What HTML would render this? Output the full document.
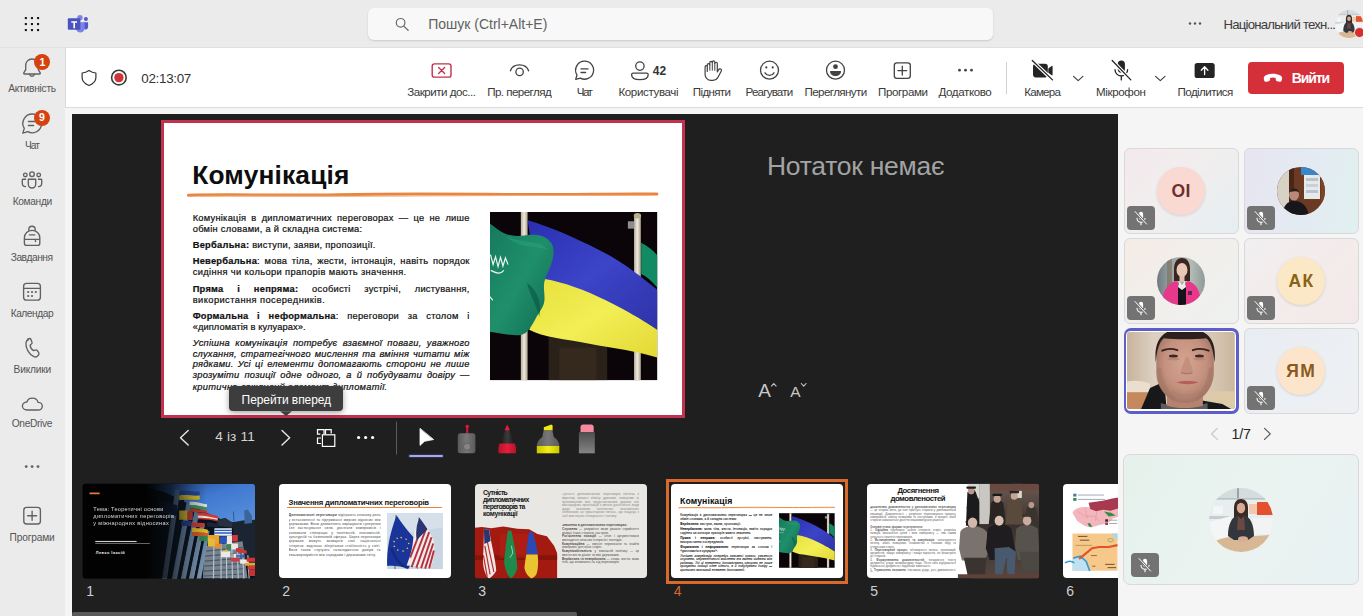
<!DOCTYPE html>
<html lang="uk">
<head>
<meta charset="utf-8">
<title>Teams</title>
<style>
*{box-sizing:border-box;margin:0;padding:0}
html,body{width:1363px;height:616px;overflow:hidden}
body{background:#ebebeb;font-family:"Liberation Sans",sans-serif;color:#424242;position:relative;font-size:12px;line-height:12px}
.abs{position:absolute}
.t{position:absolute;white-space:nowrap;color:#424242}
svg{position:absolute;left:0;top:0;overflow:visible}
#search{left:368px;top:8px;width:625px;height:32px;background:#f8f8f8;border-radius:6px;box-shadow:0 1px 2px rgba(0,0,0,.14)}
#tb{left:65px;top:47px;width:1298px;height:60px;background:#fff;border-top:1px solid #dfdfdf;border-left:1px solid #dadada}
#tbsh{left:65px;top:107px;width:1298px;height:1px;background:#dcdcdc}
#content{left:65px;top:108px;width:1298px;height:508px;background:#f5f5f5}
#leave{left:1248px;top:62px;width:96px;height:32px;background:#d5303a;border-radius:4px}
#stage{left:72px;top:114px;width:1046px;height:502px;background:#1f1f1f;overflow:hidden}
#slide{left:161px;top:120px;width:524px;height:298px;background:#fff;border:3px solid #c2314d}
.tile{position:absolute;border-radius:6px;border:1px solid #d9d9d9;overflow:hidden}
.mic{position:absolute;width:28px;height:24px;border-radius:4px;background:#737373}
.av{position:absolute;border-radius:50%;overflow:hidden}
.th{position:absolute;top:484px;width:172px;height:95px;border-radius:4px;background:#fff;overflow:hidden}
.tiny{text-align:justify;overflow:hidden;letter-spacing:.05px}
.mini .t{-webkit-text-stroke:0 transparent!important}
.mini .t[style*="font-size:9.3px"]{color:#3c3c3c!important}
.badge{position:absolute;width:16px;height:16px;border-radius:50%;background:#d6420f}
</style>
</head>
<body>
<!-- ================= TOP BAR ================= -->
<div id="search" class="abs"></div>
<div class="t" style="left:428.30px;top:17.35px;line-height:14.0px;font-size:14px;color:#616161;letter-spacing:-0.013px;">Пошук (Ctrl+Alt+E)</div>
<div class="t" style="left:1223.50px;top:18.13px;line-height:13.2px;font-size:13.2px;color:#3d3d3d;letter-spacing:-0.781px;">Національний техн...</div>
<svg style="left:1335px;top:9.500px;filter:blur(.4px)" width="28" height="28" viewBox="0 0 64 64">  <defs><clipPath id="ca3"><circle cx="32" cy="32" r="32"/></clipPath></defs>
  <g clip-path="url(#ca3)">
    <rect width="64" height="64" fill="#e8edee"/>
    <rect x="0" y="0" width="64" height="12" fill="#d4dcde"/>
    <rect x="28" y="0" width="2" height="20" fill="#9aa4a8"/><rect x="0" y="10" width="64" height="1.500" fill="#b9c4c8"/>
    <rect x="48" y="14" width="16" height="13" fill="#e4512f"/>
    <rect x="40" y="16" width="8" height="10" fill="#f1c9b0"/>
    <rect x="0" y="28" width="22" height="3" fill="#c4ced2"/><rect x="4" y="18" width="10" height="8" fill="#f3f6f6"/>
    <path d="M0 34l22-6v20l-22 8z" fill="#f4f6f6"/>
    <path d="M44 30h20v16h-20z" fill="#f2f4f4"/>
    <path d="M0 56c10-6 22-8 34-8s22 0 30-2v18h-64z" fill="#d8b894"/>
    <path d="M25 20c0-6 3-9 7-9s7 3 7 9v14h-14z" fill="#3a2a26"/>
    <ellipse cx="32" cy="20" rx="4.200" ry="5.200" fill="#d9ab94"/>
    <path d="M19 48c0-12 4-19 9-20l4 3 4-3c5 1 9 8 9 20l-6 4h-14z" fill="#33363c"/>
    <path d="M29 28l3 3 3-3 1 14h-8z" fill="#6a4a40"/>
    <ellipse cx="34" cy="51" rx="5" ry="2.800" fill="#d9ab94"/>
  </g></svg>
<div class="abs" style="left:1354px;top:27px;width:11px;height:11px;border-radius:50%;background:#d92c2c;border:1px solid #ebebeb"></div>
<svg width="1363" height="48" viewBox="0 0 1363 48">
  <!-- waffle -->
  <g fill="#1a1a1a">
    <rect x="24.8" y="17" width="2.1" height="2.1"/><rect x="30.9" y="17" width="2.1" height="2.1"/><rect x="37" y="17" width="2.1" height="2.1"/>
    <rect x="24.8" y="23" width="2.1" height="2.1"/><rect x="30.9" y="23" width="2.1" height="2.1"/><rect x="37" y="23" width="2.1" height="2.1"/>
    <rect x="24.8" y="29" width="2.1" height="2.1"/><rect x="30.9" y="29" width="2.1" height="2.1"/><rect x="37" y="29" width="2.1" height="2.1"/>
  </g>
  <!-- teams logo -->
  <circle cx="85.9" cy="19" r="2" fill="#5059c9"/>
  <path d="M83.5 22.3h4.1c.3 0 .5.2.5.5v4.2a2.6 2.6 0 0 1-4.6 1.6z" fill="#5059c9"/>
  <circle cx="80" cy="17.6" r="2.7" fill="#7b83eb"/>
  <path d="M76 22.2h7.9c.4 0 .7.3.7.7v5.3a4.3 4.3 0 0 1-8.6 0z" fill="#7b83eb"/>
  <rect x="67.8" y="18.2" width="12.6" height="11.6" rx="1" fill="#4b53bc"/>
  <path d="M71.3 21.3h5.8v1.5h-2.1v5.4h-1.6v-5.4h-2.1z" fill="#fff"/>
  <!-- search icon -->
  <circle cx="400.6" cy="22.8" r="4.3" fill="none" stroke="#6a6a6a" stroke-width="1.2"/>
  <path d="M403.8 26.1l4.3 4.2" stroke="#6a6a6a" stroke-width="1.3" stroke-linecap="round"/>
  <!-- more -->
  <circle cx="1190" cy="23.5" r="1.2" fill="#555"/><circle cx="1195" cy="23.5" r="1.2" fill="#555"/><circle cx="1200" cy="23.5" r="1.2" fill="#555"/>
</svg>

<!-- ================= TOOLBAR ================= -->
<div id="topline" class="abs" style="left:0;top:47px;width:66px;height:1px;background:#e1e1e1"></div>
<div id="tb" class="abs"></div>
<div id="tbsh" class="abs"></div>
<div id="content" class="abs"></div>
<!--TOOLBAR-->
<div class="t" style="left:141.30px;top:71.96px;line-height:13.4px;font-size:13.4px;color:#333;letter-spacing:-0.304px;">02:13:07</div>
<div class="t" style="left:407.30px;top:86.48px;line-height:11.6px;font-size:11.6px;color:#3a3a3a;letter-spacing:-0.503px;">Закрити дос...</div>
<div class="t" style="left:487.20px;top:86.48px;line-height:11.6px;font-size:11.6px;color:#3a3a3a;letter-spacing:-0.558px;">Пр. перегляд</div>
<div class="t" style="left:576.80px;top:86.48px;line-height:11.6px;font-size:11.6px;color:#3a3a3a;letter-spacing:-1.617px;">Чат</div>
<div class="t" style="left:618.40px;top:86.48px;line-height:11.6px;font-size:11.6px;color:#3a3a3a;letter-spacing:-0.380px;">Користувачі</div>
<div class="t" style="left:692.80px;top:86.48px;line-height:11.6px;font-size:11.6px;color:#3a3a3a;letter-spacing:-0.657px;">Підняти</div>
<div class="t" style="left:745.60px;top:86.48px;line-height:11.6px;font-size:11.6px;color:#3a3a3a;letter-spacing:-0.820px;">Реагувати</div>
<div class="t" style="left:804.50px;top:86.48px;line-height:11.6px;font-size:11.6px;color:#3a3a3a;letter-spacing:-0.599px;">Переглянути</div>
<div class="t" style="left:878.00px;top:86.48px;line-height:11.6px;font-size:11.6px;color:#3a3a3a;letter-spacing:-0.402px;">Програми</div>
<div class="t" style="left:938.50px;top:86.48px;line-height:11.6px;font-size:11.6px;color:#3a3a3a;letter-spacing:-0.410px;">Додатково</div>
<div class="t" style="left:1024.20px;top:86.48px;line-height:11.6px;font-size:11.6px;color:#3a3a3a;letter-spacing:-0.746px;">Камера</div>
<div class="t" style="left:1096.00px;top:86.48px;line-height:11.6px;font-size:11.6px;color:#3a3a3a;letter-spacing:-0.371px;">Мікрофон</div>
<div class="t" style="left:1177.60px;top:86.48px;line-height:11.6px;font-size:11.6px;color:#3a3a3a;letter-spacing:-0.587px;">Поділитися</div>
<div class="t" style="left:652.80px;top:64.74px;line-height:12.0px;font-size:12px;font-weight:bold;color:#333;letter-spacing:0.041px;">42</div>
<div id="leave" class="abs"></div>
<div class="t" style="left:1291.80px;top:71.05px;line-height:14.0px;font-size:14px;font-weight:bold;color:#fff;letter-spacing:-1.099px;">Вийти</div>
<svg width="1363" height="110" viewBox="0 0 1363 110" fill="none" stroke="#424242" stroke-width="1.3" stroke-linecap="round" stroke-linejoin="round">
  <!-- shield -->
  <path d="M89 70.6c2.3 1.6 4.6 2.3 6.9 2.4v4.6c0 3.6-2.6 6.3-6.9 7.9c-4.3-1.6-6.9-4.3-6.9-7.9v-4.6c2.3-.1 4.6-.8 6.900-2.400z" stroke="#333" stroke-width="1.2"/>
  <!-- record -->
  <circle cx="118.9" cy="77.6" r="7.3" stroke="#3a3a3a" stroke-width="1.6"/>
  <circle cx="118.9" cy="77.600" r="4.700" fill="#d13438" stroke="none"/>
  <!-- close share (red) -->
  <rect x="432.2" y="63.900" width="18.800" height="13.200" rx="2.200" stroke="#c4314b" stroke-width="1.400"/>
  <path d="M438.6 67.5l6 6M444.6 67.5l-6 6" stroke="#c4314b" stroke-width="1.300"/>
  <!-- eye -->
  <path d="M510.4 70.8c1.2-3.800 4.800-6 9.100-6s7.900 2.200 9.100 6" />
  <circle cx="519.600" cy="71.900" r="3.700"/>
  <!-- chat bubble -->
  <path d="M584.6 61.200a9 9 0 1 1-4.300 16.900l-4.600 1.300 1.300-4.400a9 9 0 0 1 7.600-13.800z"/>
  <path d="M581 68.900h7M581 72.500h4.600"/>
  <!-- people -->
  <circle cx="639.900" cy="66.100" r="4.200"/>
  <path d="M633.200 73.100h13.400c.9 0 1.600.7 1.600 1.600 0 3-3.200 4.900-8.300 4.900s-8.300-1.900-8.300-4.900c0-.9.700-1.600 1.600-1.600z"/>
  <!-- hand -->
  <path d="M707.300 71.500v-6.600a1.250 1.250 0 0 1 2.500 0v-2.300a1.250 1.250 0 0 1 2.500 0v-.4a1.250 1.250 0 0 1 2.500 0v1.300a1.250 1.250 0 0 1 2.500 0v8.400l1.400-2.300c.5-.8 1.500-1 2.200-.5.600.4.800 1.200.4 1.900l-3.300 6.300c-1 1.900-2.900 3-5 3h-2.100c-3.200 0-5.800-2.600-5.800-5.800v-7.800a1.100 1.100 0 0 1 2.200 0z" stroke-width="1.200"/>
  <path d="M709.800 64.900v5.400M712.300 62.600v7.700M714.800 63.500v6.800" stroke-width="1"/>
  <!-- smiley -->
  <circle cx="769.500" cy="70.200" r="9"/>
  <circle cx="766.300" cy="67.400" r="1.100" fill="#424242" stroke="none"/><circle cx="772.700" cy="67.400" r="1.100" fill="#424242" stroke="none"/>
  <path d="M765 72.800c1 1.700 2.600 2.600 4.500 2.600s3.500-.9 4.500-2.600"/>
  <!-- view -->
  <circle cx="835.500" cy="70.200" r="9"/>
  <circle cx="835.500" cy="66.700" r="2.400" fill="#424242" stroke="none"/>
  <path d="M830.500 71h10c.3 0 .5.200.5.500 0 2.700-2.400 4.500-5.500 4.500s-5.500-1.800-5.500-4.500c0-.3.200-.5.500-.5z" fill="#424242" stroke="none"/>
  <!-- apps -->
  <rect x="894.300" y="62.800" width="16" height="15.600" rx="2.600"/>
  <path d="M902.300 66.200v8.800M897.900 70.600h8.800"/>
  <!-- more -->
  <g fill="#424242" stroke="none"><circle cx="959.500" cy="70.200" r="1.400"/><circle cx="965.500" cy="70.200" r="1.400"/><circle cx="971.500" cy="70.200" r="1.400"/></g>
  <!-- divider -->
  <path d="M1006.500 62v32.500" stroke="#d1d1d1" stroke-width="1" stroke-linecap="butt"/>
  <!-- camera off -->
  <rect x="1033" y="63.700" width="14.800" height="13.700" rx="2.800" fill="#242424" stroke="none"/>
  <path d="M1048.300 68.400l3.400-2.500c.4-.3.900 0 .9.500v8.300c0 .5-.5.800-.9.500l-3.400-2.500z" fill="#242424" stroke="none"/>
  <path d="M1032.300 60.500l20.200 19.400" stroke="#fff" stroke-width="3.600"/>
  <path d="M1032.300 60.500l20.200 19.400" stroke="#242424" stroke-width="1.300"/>
  <path d="M1073.500 76.400l4.700 4.200 4.700-4.200" stroke-width="1.200"/>
  <!-- mic off -->
  <rect x="1117.700" y="60.500" width="7.200" height="12.200" rx="3.600" fill="#242424" stroke="none"/>
  <path d="M1115 69.700a6.300 6.300 0 0 0 12.600 0M1121.300 76.200v3.700" stroke="#242424"/>
  <path d="M1112.200 60.500l18.600 19.400" stroke="#fff" stroke-width="3.600"/>
  <path d="M1112.200 60.500l18.600 19.400" stroke="#242424" stroke-width="1.300"/>
  <path d="M1155.600 76.400l4.700 4.200 4.700-4.200" stroke-width="1.200"/>
  <!-- share -->
  <rect x="1194.600" y="63.100" width="20.100" height="14.900" rx="2.600" fill="#242424" stroke="none"/>
  <path d="M1204.600 74.600v-7.600M1201.300 70.200l3.300-3.400 3.300 3.400" stroke="#fff" stroke-width="1.300"/>
  <!-- hangup phone -->
  <path d="M1264 79.600c-.6-1.600 0-3.100 1.500-4 4.600-2.500 10.300-2.500 14.900 0 1.500.9 2.100 2.400 1.500 4l-.3.900c-.3.900-1.200 1.400-2.100 1.200l-2.400-.5c-.8-.2-1.400-.9-1.400-1.700v-1.500c-1.800-.7-3.800-.7-5.600 0v1.500c0 .8-.6 1.500-1.400 1.700l-2.400.5c-.9.200-1.800-.3-2.100-1.200z" fill="#fff" stroke="none"/>
</svg>
<!--/TOOLBAR-->

<!-- ================= RAIL ================= -->
<!--RAIL-->
<div class="t" style="left:8.20px;top:84.27px;line-height:10.2px;font-size:10.2px;color:#555;letter-spacing:-0.233px;">Активність</div>
<div class="t" style="left:25.00px;top:140.57px;line-height:10.2px;font-size:10.2px;color:#555;letter-spacing:-0.953px;">Чат</div>
<div class="t" style="left:12.70px;top:196.97px;line-height:10.2px;font-size:10.2px;color:#555;letter-spacing:-0.339px;">Команди</div>
<div class="t" style="left:10.70px;top:252.77px;line-height:10.2px;font-size:10.2px;color:#555;letter-spacing:-0.457px;">Завдання</div>
<div class="t" style="left:10.70px;top:308.77px;line-height:10.2px;font-size:10.2px;color:#555;letter-spacing:-0.461px;">Календар</div>
<div class="t" style="left:13.60px;top:364.67px;line-height:10.2px;font-size:10.2px;color:#555;letter-spacing:-0.224px;">Виклики</div>
<div class="t" style="left:11.70px;top:418.67px;line-height:10.2px;font-size:10.2px;color:#555;letter-spacing:-0.319px;">OneDrive</div>
<div class="t" style="left:9.60px;top:532.57px;line-height:10.2px;font-size:10.2px;color:#555;letter-spacing:-0.172px;">Програми</div>
<svg width="66" height="616" viewBox="0 0 66 616" fill="none" stroke="#616161" stroke-width="1.35" stroke-linecap="round" stroke-linejoin="round">
  <!-- bell -->
  <path d="M32 59c-3.700 0-6.300 2.800-6.300 6.400v4.200l-1.900 3.300c-.3.500.1 1.100.6 1.100h15.200c.5 0 .9-.6.600-1.100l-1.900-3.300v-4.200c0-3.600-2.600-6.400-6.300-6.400z"/>
  <path d="M29.600 74.300a2.450 2.450 0 0 0 4.800 0"/>
  <!-- chat -->
  <path d="M32.300 114a9.400 9.400 0 1 1-4.500 17.700l-5 1.400 1.500-4.700a9.400 9.400 0 0 1 8-14.400z"/>
  <path d="M28.400 121.500h7.800M28.400 125.500h5.200"/>
  <!-- teams people -->
  <circle cx="32" cy="174.200" r="2.300"/><circle cx="25.300" cy="174.900" r="1.800"/><circle cx="38.700" cy="174.900" r="1.800"/>
  <path d="M28.300 179.200h7.400v5.100a3.700 3.700 0 0 1-7.400 0z"/>
  <path d="M25.600 179.200h-2.600c-.4 0-.7.300-.7.700v3.300c0 2 1.500 3.400 3.300 3.400M38.400 179.200h2.600c.4 0 .7.300.7.700v3.300c0 2-1.500 3.400-3.300 3.400"/>
  <!-- backpack -->
  <path d="M28.800 230.300v-.8a3.200 3.200 0 0 1 6.400 0v.8"/>
  <path d="M32.100 230.300c4.300 0 7.700 3.300 7.700 7.500v5.400c0 1.200-1 2.200-2.200 2.200h-11c-1.200 0-2.200-1-2.200-2.200v-5.400c0-4.200 3.400-7.500 7.700-7.500z"/>
  <path d="M24.600 239.300h15M29.300 234.800h5.600M35.500 239.500v2"/>
  <!-- calendar -->
  <rect x="23.600" y="283.400" width="16.800" height="16.800" rx="3"/>
  <path d="M23.600 288.300h16.800"/>
  <g fill="#616161" stroke="none"><circle cx="28.200" cy="292" r="1.100"/><circle cx="32" cy="292" r="1.100"/><circle cx="35.800" cy="292" r="1.100"/><circle cx="28.200" cy="296" r="1.100"/><circle cx="32" cy="296" r="1.100"/></g>
  <!-- phone -->
  <path d="M27.700 339l1.600-.5c1-.3 2 .2 2.400 1.100l1.100 2.700c.4.900.1 1.900-.6 2.500l-1.600 1.300c.3 2.400 2.100 5.300 4.100 6.400l2-.7c.9-.3 1.900 0 2.400.8l1.600 2.300c.5.800.4 1.900-.3 2.600l-1.100 1.100c-1.100 1.100-2.700 1.500-4.200.9-5.400-2.200-9.800-9.800-9.300-15.900.2-1.700 1.300-3.300 2.900-3.800z" transform="translate(32.200,347.400) scale(.86) translate(-33.100,-348.700)" stroke-width="1.550"/>
  <!-- cloud -->
  <path d="M27 410h11.200c2.300 0 4.100-1.700 4.100-3.800 0-2.100-1.800-3.800-4.100-3.800h-.2c-.5-2.500-2.800-4.300-5.600-4.300-2.600 0-4.900 1.600-5.500 3.900-2.600.1-4.500 1.900-4.500 4 0 2.200 2 4 4.600 4z"/>
  <!-- dots -->
  <g fill="#616161" stroke="none"><circle cx="26.200" cy="466.600" r="1.400"/><circle cx="32.100" cy="466.600" r="1.400"/><circle cx="38" cy="466.600" r="1.400"/></g>
  <!-- apps -->
  <rect x="23.800" y="507.400" width="16.600" height="16.600" rx="2.800"/>
  <path d="M32.100 511.200v9M27.600 515.700h9"/>
</svg>
<div class="badge" style="left:33.900px;top:53.600px"></div>
<div class="badge" style="left:33.900px;top:109.500px"></div>
<div class="t" style="left:39.40px;top:56.51px;line-height:10.5px;font-size:10.5px;font-weight:bold;color:#fff;">1</div>
<div class="t" style="left:39.00px;top:112.41px;line-height:10.5px;font-size:10.5px;font-weight:bold;color:#fff;">9</div>
<!--/RAIL-->

<!-- ================= STAGE ================= -->
<div id="stage" class="abs"></div>
<!--STAGE-->
<div id="slide" class="abs"></div>

<div class="t" style="left:192.20px;top:162.44px;line-height:26.3px;font-size:26.3px;font-weight:bold;color:#0d0d0d;letter-spacing:0.190px;">Комунікація</div>
<svg width="700" height="420" viewBox="0 0 700 420">
  <path d="M188.400 195.300c40-1.400 90 .6 150-.6s110-.8 170-.2 110-1.200 148.500-.4" fill="none" stroke="#e9853f" stroke-width="3" stroke-linecap="round"/>
  <path d="M200 196.300c60-.6 120 .4 200-.2s160-.6 250-.8" fill="none" stroke="#f0b184" stroke-width="1" stroke-linecap="round"/>
</svg>
<div class="t" style="left:192.70px;top:213.63px;line-height:9.3px;font-size:9.3px;color:#111;letter-spacing:0.250px;word-spacing:2.287px;-webkit-text-stroke:0.22px currentColor;">Комунікація в дипломатичних переговорах — це не лише</div>
<div class="t" style="left:192.70px;top:224.63px;line-height:9.3px;font-size:9.3px;color:#111;letter-spacing:0.285px;-webkit-text-stroke:0.22px currentColor;">обмін словами, а й складна система:</div>
<div class="t" style="left:192.70px;top:240.53px;line-height:9.3px;font-size:9.3px;color:#111;letter-spacing:0.262px;-webkit-text-stroke:0.22px currentColor;"><b>Вербальна:</b> виступи, заяви, пропозиції.</div>
<div class="t" style="left:192.70px;top:257.43px;line-height:9.3px;font-size:9.3px;color:#111;letter-spacing:0.250px;word-spacing:1.809px;-webkit-text-stroke:0.22px currentColor;"><b>Невербальна</b>: мова тіла, жести, інтонація, навіть порядок</div>
<div class="t" style="left:192.70px;top:268.03px;line-height:9.3px;font-size:9.3px;color:#111;letter-spacing:0.369px;-webkit-text-stroke:0.22px currentColor;">сидіння чи кольори прапорів мають значення.</div>
<div class="t" style="left:192.70px;top:284.53px;line-height:9.3px;font-size:9.3px;color:#111;letter-spacing:0.250px;word-spacing:10.921px;-webkit-text-stroke:0.22px currentColor;"><b>Пряма і непряма:</b> особисті зустрічі, листування,</div>
<div class="t" style="left:192.70px;top:295.53px;line-height:9.3px;font-size:9.3px;color:#111;letter-spacing:0.433px;-webkit-text-stroke:0.22px currentColor;">використання посередників.</div>
<div class="t" style="left:192.70px;top:311.93px;line-height:9.3px;font-size:9.3px;color:#111;letter-spacing:0.250px;word-spacing:5.838px;-webkit-text-stroke:0.22px currentColor;"><b>Формальна і неформальна</b>: переговори за столом і</div>
<div class="t" style="left:192.70px;top:322.93px;line-height:9.3px;font-size:9.3px;color:#111;letter-spacing:0.089px;-webkit-text-stroke:0.22px currentColor;">«дипломатія в кулуарах».</div>
<div class="t" style="left:192.70px;top:339.03px;line-height:9.3px;font-size:9.3px;font-style:italic;color:#111;letter-spacing:0.250px;word-spacing:2.446px;-webkit-text-stroke:0.22px currentColor;">Успішна комунікація потребує взаємної поваги, уважного</div>
<div class="t" style="left:192.70px;top:349.83px;line-height:9.3px;font-size:9.3px;font-style:italic;color:#111;letter-spacing:0.250px;word-spacing:0.979px;-webkit-text-stroke:0.22px currentColor;">слухання, стратегічного мислення та вміння читати між</div>
<div class="t" style="left:192.70px;top:360.43px;line-height:9.3px;font-size:9.3px;font-style:italic;color:#111;letter-spacing:0.250px;word-spacing:1.334px;-webkit-text-stroke:0.22px currentColor;">рядками. Усі ці елементи допомагають сторони не лише</div>
<div class="t" style="left:192.70px;top:371.33px;line-height:9.3px;font-size:9.3px;font-style:italic;color:#111;letter-spacing:0.250px;word-spacing:2.113px;-webkit-text-stroke:0.22px currentColor;">зрозуміти позиції одне одного, а й побудувати довіру —</div>
<div class="t" style="left:192.70px;top:382.73px;line-height:9.3px;font-size:9.3px;font-style:italic;color:#111;letter-spacing:0.296px;-webkit-text-stroke:0.22px currentColor;">критично важливий елемент дипломатії.</div>
<!-- slide photo -->
<svg style="left:490.2px;top:211.700px;filter:blur(.45px)" width="167.200" height="168.100" viewBox="0 0 542 545" preserveAspectRatio="none">
  <defs>
    <linearGradient id="gb" x1="0" y1="0" x2="1" y2="1"><stop offset="0" stop-color="#2a2fb0"/><stop offset=".5" stop-color="#3c44c8"/><stop offset="1" stop-color="#2e33a8"/></linearGradient>
    <linearGradient id="gy" x1="0" y1="0" x2="1" y2="1"><stop offset="0" stop-color="#e6e13c"/><stop offset=".5" stop-color="#f2ee55"/><stop offset="1" stop-color="#e3d935"/></linearGradient>
    <linearGradient id="gg" x1="0" y1="0" x2="1" y2="1"><stop offset="0" stop-color="#157a5c"/><stop offset=".5" stop-color="#1f8f6b"/><stop offset="1" stop-color="#0f6a50"/></linearGradient>
    <linearGradient id="gp" x1="0" y1="0" x2="1" y2="0"><stop offset="0" stop-color="#b8b0a0"/><stop offset=".5" stop-color="#efe9dc"/><stop offset="1" stop-color="#a89f8c"/></linearGradient>
  </defs>
  <rect width="542" height="545" fill="#0b0509"/>
  <rect x="190" y="395" width="190" height="150" fill="#2a2118"/>
  <rect x="225" y="440" width="120" height="105" fill="#3a2e20" opacity=".7"/>
  <rect x="100" y="0" width="22" height="545" fill="url(#gp)"/>
  <rect x="467" y="12" width="22" height="533" fill="url(#gp)"/>
  <ellipse cx="478" cy="12" rx="12" ry="9" fill="#b9ae8a"/>
  <rect x="447" y="30" width="20" height="24" fill="#8d8d8d"/>
  <path d="M490 100c20 10 38 24 52 40v105c-18-22-34-36-52-44z" fill="#128a63"/>
  <path d="M122 27c70 20 150 55 230 95s140 90 190 130v130c-60-40-130-80-200-100s-130-40-190-60z" fill="url(#gb)"/>
  <path d="M177 217c60 10 130 35 200 70s120 65 165 95v90c-60-20-140-30-220-45s-150-20-195-45c20-50 40-110 50-165z" fill="url(#gy)"/>
  <path d="M0 37c30 25 60 45 100 40s75-10 100 25c15 30 0 70-20 110c-15 40 10 70-15 105c-20 30-30 60-50 75s-60 5-115 -4z" fill="url(#gg)"/>
  <path d="M50 75c40 30 110 10 140 50c-40-20-100 0-140-50z" fill="#2aa37c" opacity=".5"/>
  <path d="M120 230c30 20 50 60 40 110c-10-40-30-70-40-110z" fill="#0a5540" opacity=".6"/>
  <path d="M2 140l8 30 8-25 8 32 8-30 8 28 8-26 8 20M4 190c20 10 30 12 40 0M0 275l8 10" fill="none" stroke="#e9f3ee" stroke-width="4" stroke-linecap="round"/>
</svg>

<!-- tooltip -->
<div class="abs" style="left:229px;top:386.400px;width:114px;height:25.100px;background:#3d3d3d;border-radius:4px;box-shadow:0 2px 6px rgba(0,0,0,.35)"></div>
<svg width="400" height="420" viewBox="0 0 400 420"><path d="M280 411.300h12l-6 4.700z" fill="#3d3d3d"/></svg>
<div class="t" style="left:241.60px;top:393.94px;line-height:12.0px;font-size:12px;color:#fff;letter-spacing:-0.078px;">Перейти вперед</div>
<!-- controls -->
<div class="t" style="left:215.20px;top:430.09px;line-height:13.6px;font-size:13.600px;color:#d6d6d6;letter-spacing:0.186px;">4 із 11</div>
<svg width="700" height="470" viewBox="0 0 700 470" fill="none" stroke="#fff" stroke-width="1.200" stroke-linecap="round" stroke-linejoin="round">
  <path d="M188.200 430.400l-7.700 7.300 7.700 7.300" stroke="#e6e6e6" stroke-width="1.400"/>
  <path d="M282 430.400l7.700 7.300-7.700 7.300" stroke="#e6e6e6" stroke-width="1.400"/>
  <!-- grid icon -->
  <path d="M324 434.200v-4.600h-6.500v4.600h2.800M325.500 434.200v-4.600h5.700v3.800M321 438h-3.500v5.500h3.500" stroke-linecap="butt" stroke-linejoin="miter"/>
  <rect x="322.400" y="434.800" width="12.400" height="11.600" stroke-linejoin="miter"/>
  <g fill="#fff" stroke="none"><circle cx="358.600" cy="437.500" r="1.600"/><circle cx="365.600" cy="437.500" r="1.600"/><circle cx="372.600" cy="437.500" r="1.600"/></g>
  <path d="M396.500 421.500v33" stroke="#5c5c5c" stroke-width="1" stroke-linecap="butt"/>
  <!-- cursor -->
  <path d="M420 428.700v16.700l4.600-4.100 8.700-1.700z" fill="#fff" stroke="#fff" stroke-width=".8"/>
  <rect x="408" y="453.800" width="36" height="4.400" rx="2.200" fill="#3a3b6e" stroke="none" opacity=".55"/>
  <rect x="409.200" y="454.900" width="33.800" height="2.200" rx="1.100" fill="#a7abe8" stroke="none"/>
</svg>
<!-- tools -->
<svg width="700" height="470" viewBox="0 0 700 470">
  <defs>
    <linearGradient id="tg" x1="0" y1="0" x2="1" y2="0"><stop offset="0" stop-color="#5a5a5a"/><stop offset=".5" stop-color="#777"/><stop offset="1" stop-color="#5a5a5a"/></linearGradient>
    <linearGradient id="tr" x1="0" y1="0" x2="1" y2="0"><stop offset="0" stop-color="#b5142c"/><stop offset=".5" stop-color="#e81d3c"/><stop offset="1" stop-color="#b5142c"/></linearGradient>
    <linearGradient id="ty" x1="0" y1="0" x2="1" y2="0"><stop offset="0" stop-color="#c9c400"/><stop offset=".5" stop-color="#f3ee12"/><stop offset="1" stop-color="#c9c400"/></linearGradient>
    <linearGradient id="tk" x1="0" y1="0" x2="1" y2="0"><stop offset="0" stop-color="#121212"/><stop offset=".5" stop-color="#3b3b3b"/><stop offset="1" stop-color="#121212"/></linearGradient>
    <linearGradient id="te" x1="0" y1="0" x2="0" y2="1"><stop offset="0" stop-color="#4f4f4f"/><stop offset=".6" stop-color="#6e6e6e"/><stop offset="1" stop-color="#858585"/></linearGradient>
  </defs>
  <!-- laser -->
  <rect x="466.100" y="425" width="2.200" height="8.500" rx="1" fill="#d4152f"/><circle cx="467.200" cy="426.500" r="1.700" fill="#e2183a"/>
  <rect x="457.800" y="433.200" width="17.600" height="20.100" rx="2.500" fill="url(#tg)"/>
  <circle cx="467.100" cy="446.600" r="3.600" fill="#858585"/><circle cx="467.100" cy="446.600" r="3.600" fill="none" stroke="#5a5a5a" stroke-width=".8"/>
  <!-- pen -->
  <path d="M507.200 425l-8.400 22v6.300h17.200v-6.300z" fill="url(#tk)"/>
  <path d="M507.200 424.600l-2.600 5.600h5.200z" fill="#e81d3c"/>
  <path d="M499.600 443.400h15.200l1.200 3.600v6.300h-17.600v-6.300z" fill="url(#tr)"/>
  <!-- highlighter -->
  <path d="M543.800 427.200l7.600-2.600 1.200 1v5h-8.800z" fill="#efe916"/>
  <path d="M543.600 430.400h8.800l1.400 6.500c3 2 5.500 5 5.500 8.500v.800h-22.500v-.800c0-3.500 2.500-6.500 5.500-8.500z" fill="url(#tg)"/>
  <rect x="536.800" y="446" width="22.500" height="7.300" fill="url(#ty)"/>
  <!-- eraser -->
  <path d="M580.500 427c0-1.400 1.100-2.500 2.500-2.500h8.200c1.400 0 2.500 1.100 2.500 2.500v5.300h-13.200z" fill="#f58a9e"/>
  <rect x="578.900" y="432.200" width="15.900" height="21.100" fill="url(#te)"/>
</svg>
<!-- notes -->
<div class="t" style="left:766.90px;top:153.47px;line-height:26.5px;font-size:26.500px;color:#a3a3a3;letter-spacing:-0.257px;">Нотаток немає</div>
<div class="t" style="left:758.30px;top:380.92px;line-height:19.0px;font-size:19px;color:#c8c8c8;">A</div>
<div class="t" style="left:790.30px;top:383.88px;line-height:15.5px;font-size:15.500px;color:#c8c8c8;">A</div>
<svg width="820" height="400" viewBox="0 0 820 400" fill="none" stroke="#c8c8c8" stroke-width="1.100" stroke-linecap="round" stroke-linejoin="round">
  <path d="M771.500 386.200l2.300-2.700 2.300 2.700"/>
  <path d="M801.300 383.500l2.400 2.700 2.400-2.700"/>
</svg>
<!-- ============ THUMBNAILS ============ -->
<!-- thumb 1 -->
<svg style="left:82.120px;top:480px;filter:blur(.4px)" width="177.810" height="101.990" viewBox="-410 0 1074 616">
  <defs>
    <clipPath id="c1"><rect x="-406" y="22" width="1041" height="573" rx="18"/></clipPath>
    <linearGradient id="sky" x1="0" y1="0" x2="1" y2="1"><stop offset="0" stop-color="#1d3c78"/><stop offset=".45" stop-color="#3f78cf"/><stop offset="1" stop-color="#5a93df"/></linearGradient>
    <linearGradient id="fade" x1="-410" y1="0" x2="664" y2="0" gradientUnits="userSpaceOnUse"><stop offset="0" stop-color="#020202"/><stop offset=".36" stop-color="#020202"/><stop offset=".5" stop-color="#060a10" stop-opacity=".72"/><stop offset=".62" stop-color="#0a1018" stop-opacity=".25"/><stop offset=".7" stop-color="#000" stop-opacity="0"/></linearGradient>
    <linearGradient id="pl" x1="0" y1="0" x2="0" y2="1"><stop offset="0" stop-color="#5d7c9e"/><stop offset="1" stop-color="#8aa6c2"/></linearGradient>
  </defs>
  <g clip-path="url(#c1)">
    <rect x="-410" y="0" width="1074" height="616" fill="#0a121c"/>
    <path d="M-100 22h740v235l-110 5-100-25-90-40-120-60-120-60z" fill="url(#sky)"/>
    <path d="M500 255l60-10 75-5v260l-120 20z" fill="#1b2531"/>
    <path d="M570 182l22-4 25 40v42l-45 6z" fill="#3c6698"/><path d="M505 190l3 60" stroke="#27405e" stroke-width="4"/>
    <path d="M410 240l45-12 45 30v30l-95-10z" fill="#26313e"/>
    <path d="M330 400l230-30 30 225h-270z" fill="#76838f"/>
    <g stroke="#4a5560" stroke-width="7"><path d="M335 430l225-22M333 460l228-20M331 490l232-18M329 520l236-16M327 550l240-14M325 580l244-12"/></g>
    <g stroke="url(#pl)" stroke-width="30" stroke-linecap="butt">
      <path d="M168 60l-80 540"/><path d="M236 140l-88 460"/><path d="M283 195l-82 405"/><path d="M318 265l-68 335"/><path d="M346 305l-52 295"/>
    </g>
    <g stroke="#0c131c" stroke-width="14"><path d="M200 120l-82 480"/><path d="M262 180l-84 420"/><path d="M302 240l-76 360"/><path d="M334 300l-60 300"/></g>
    <g stroke="#b4c4d4" stroke-width="7"><path d="M388 330l-4 270M430 350v250M462 372l2 228M495 392l4 208M528 410l6 190M560 430l8 170M592 455l8 145"/></g>
    <!-- flags -->
    <path d="M177 66c40-8 80 6 124 4v26c-44 4-84-8-124 0z" fill="#24489f"/><path d="M177 94c40-8 80 4 124 0v24c-44 6-84-4-124 4z" fill="#dbc224"/>
    <path d="M55 122l110 30v68l-110-28z" fill="#151f45"/>
    <path d="M240 132c35-6 70 10 105 14v18c-35-2-70-14-105-10z" fill="#d9dedf"/><path d="M240 152c35-4 70 10 105 12v18c-35-2-70-12-105-10z" fill="#3c9456"/><path d="M240 174c35-2 70 8 105 10v14c-35 0-70-8-105-6z" fill="#c53a30"/>
    <path d="M177 184h50v56h-50z" fill="#e0bb2a"/><path d="M227 190h32v52h-32z" fill="#c43a2c"/>
    <path d="M290 196c40 0 80 10 120 22v32c-40-8-80-14-120-12z" fill="#cd3a36"/><path d="M290 214c40 0 80 10 120 18v8c-40-8-80-14-120-12z" fill="#ece7e5"/>
    <path d="M190 246h60v32h-60z" fill="#263f8e"/><path d="M250 256l80 4v26l-80-4z" fill="#cf3a30"/>
    <path d="M255 290c30-2 65 4 95 10v22c-30-4-65-8-95-8z" fill="#e4ba2a"/><path d="M255 314c30 0 65 4 95 8v22c-30-4-65-6-95-6z" fill="#d65a2a"/><path d="M300 338h50v30h-50z" fill="#2f8a4a"/>
    <path d="M345 255l70 10v22l-70-6z" fill="#1a2338"/>
    <path d="M390 292h105v44h-105z" fill="#e8eef6"/><path d="M390 300h105v8h-105zM390 316h105v8h-105z" fill="#2a5fc4"/>
    <path d="M350 332h70v70h-70z" fill="#e8a236"/><path d="M352 350l40 10v40h-40z" fill="#e6c23a" opacity=".8"/>
    <path d="M425 340h40v45h-40z" fill="#2b55b8"/><path d="M465 336h32v50h-32z" fill="#ece8e6"/><path d="M497 332h34v40h-34z" fill="#d13a3a"/>
    <path d="M395 385h35v30h-35z" fill="#e2902e"/><path d="M460 390h30v30h-30z" fill="#3a8a4a"/><path d="M492 384h40v36h-40z" fill="#ece8e6"/>
    <path d="M520 410c25 0 45 8 65 18v18c-20-6-40-10-65-10z" fill="#cf3535"/>
    <path d="M430 430h56v36h-56z" fill="#ece8e6"/><path d="M440 425h30v8h-30z" fill="#e2c23a"/>
    <path d="M505 445h40v26h-40z" fill="#ece8e6"/><path d="M520 450h50v20h-50z" fill="#2b55b8" opacity=".8"/>
    <path d="M490 470h50v22h-50z" fill="#cf3a3a"/><path d="M545 480h50v26h-50z" fill="#ece8e6"/><path d="M585 470h50v24h-50z" fill="#cf3535"/>
    <path d="M575 500h60v18h-60z" fill="#e2a83a"/><path d="M590 518h45v22h-45z" fill="#d13a3a"/><path d="M600 540h35v40h-35z" fill="#c83232"/>
    <rect x="-410" y="0" width="1074" height="616" fill="url(#fade)"/>
    <rect x="-365" y="76" width="62" height="10" rx="3" fill="#e8793a"/>
    <rect x="-330" y="368" width="250" height="7" fill="#cfcfcf"/><rect x="-330" y="381" width="330" height="4" fill="#9a9a9a"/>
  </g>
</svg>
<div class="t" style="left:93.30px;top:506.76px;line-height:5.6px;font-size:5.6px;color:#f2f2f2;letter-spacing:0.257px;opacity:.86;">Тема: Теоретичні основи</div>
<div class="t" style="left:93.30px;top:513.96px;line-height:5.6px;font-size:5.6px;color:#f2f2f2;letter-spacing:0.334px;opacity:.86;">дипломатичних переговорів</div>
<div class="t" style="left:93.30px;top:521.36px;line-height:5.6px;font-size:5.6px;color:#f2f2f2;letter-spacing:0.326px;opacity:.86;">у міжнародних відносинах</div>
<div class="t" style="left:95.70px;top:550.60px;line-height:3.9px;font-size:3.9px;font-weight:bold;color:#f2f2f2;letter-spacing:0.507px;">Левко Іаксій</div>
<!-- thumb 2 -->
<div class="th" style="left:278.700px;width:172.500px;top:483.700px;height:94.800px"></div>
<div class="t" style="left:288.60px;top:498.68px;line-height:7.7px;font-size:7.700px;font-weight:bold;color:#161616;letter-spacing:-0.196px;">Значення дипломатичних переговорів</div>
<div class="abs" style="left:287px;top:506.800px;width:155px;height:.8px;background:#e9853f"></div>
<div class="abs tiny" style="left:288.600px;top:513.200px;width:92px;height:52.600px;font-size:3.500px;line-height:4.380px;color:#4a4a4a;letter-spacing:.12px"><b>Дипломатичні переговори</b> відіграють ключову роль у встановленні та підтриманні мирних відносин між державами. Вони дозволяють вирішувати суперечки без застосування сили, досягати компромісів і розвивати співпрацю у політичній, економічній, культурній та безпековій сферах. Через переговори держави можуть захищати свої національні інтереси, водночас зберігаючи стабільність у світі. Вони також слугують налагодженню довіри та взаєморозуміння між народами і державами світу.</div>
<svg style="left:268px;top:470px" width="200" height="146" viewBox="0 0 844 616">
  <rect x="503" y="182" width="235" height="236" fill="#c9d6e2"/>
  <path d="M503 182h235v60l-235 40z" fill="#d5e0ea"/>
  <path d="M540 190l-4 228" stroke="#5a5a5a" stroke-width="4"/><path d="M636 200l-6 218" stroke="#777" stroke-width="3"/>
  <path d="M543 192c20 30 50 70 75 95c5 40-5 90-25 130c-30-10-60-15-90-12c-3-60 10-140 40-213z" fill="#19349a"/>
  <path d="M520 330c10 30 30 70 70 85" fill="none" stroke="#10256e" stroke-width="10" opacity=".6"/>
  <g fill="#e9c93a"><circle cx="562" cy="285" r="3.500"/><circle cx="583" cy="292" r="3.500"/><circle cx="594" cy="310" r="3.500"/><circle cx="588" cy="330" r="3.500"/><circle cx="570" cy="342" r="3.500"/><circle cx="548" cy="338" r="3.500"/><circle cx="533" cy="322" r="3.500"/><circle cx="532" cy="302" r="3.500"/><circle cx="545" cy="288" r="3.500"/></g>
  <path d="M638 200c20 25 45 55 62 100c5 40 0 80-15 118c-35-8-70-12-100-15c15-40 25-70 28-115c5-30 15-60 25-88z" fill="#f0ece9"/>
  <g stroke="#b8303f" stroke-width="8" fill="none"><path d="M668 245l-62 165M680 262l-54 150M690 284l-44 130M697 310l-34 106M700 340l-20 76M646 250l-46 120"/></g>
  <path d="M638 200c12 15 25 32 35 50l-45 45c-5-20-2-40 0-60z" fill="#2a3575"/>
</svg>
<!-- thumb 3 -->
<div class="th" style="left:474.700px;width:172.500px;top:483.700px;height:94.800px;background:#e9e7e4"></div>
<div class="t" style="left:483.00px;top:489.94px;line-height:6.8px;font-size:6.800px;font-weight:bold;color:#161616;letter-spacing:-0.656px;">Сутність</div>
<div class="t" style="left:483.00px;top:497.24px;line-height:6.8px;font-size:6.800px;font-weight:bold;color:#161616;letter-spacing:-0.577px;">дипломатичних</div>
<div class="t" style="left:483.00px;top:504.34px;line-height:6.8px;font-size:6.800px;font-weight:bold;color:#161616;letter-spacing:-0.613px;">переговорів та</div>
<div class="t" style="left:483.00px;top:511.44px;line-height:6.8px;font-size:6.800px;font-weight:bold;color:#161616;letter-spacing:-0.265px;">комунікації</div>
<div class="abs tiny" style="left:561.900px;top:493.200px;width:77.500px;font-size:3.100px;line-height:3.650px;color:#8a8886">Сутність дипломатичних переговорів полягає в мирному процесі обміну думками, позиціями та пропозиціями між представниками держав або міжнародних організацій з метою досягнення згоди щодо важливих політичних, економічних, безпекових чи гуманітарних питань, що поєднує в собі мистецтво спілкування і тактику.</div>
<div class="abs tiny" style="left:561.900px;top:524.200px;width:77.500px;font-size:3.100px;line-height:3.700px;color:#4a4846"><b>Значення в дипломатичних переговорах:</b><br><b>Слухання</b> — розуміння мови уважне сприйняття позиції іншої сторони, настроїв.<br><b>Роз'яснення позицій</b> — чітке і аргументоване викладення власних інтересів і поглядів.<br><b>Комунікаційна</b> — вміння переконати та знайти компроміс для обох сторін.<br><b>Комунікабельність</b> у зовнішній політиці — це вміння вести діалог як між державами.<br><b>Вербальна та невербальна</b> — слова, жести, мова тіла, що впливають на хід переговорів.</div>
<svg style="left:464px;top:470px" width="200" height="146" viewBox="0 0 844 616">
  <defs><clipPath id="c3"><rect x="45" y="58" width="728" height="400" rx="13"/></clipPath></defs>
  <g clip-path="url(#c3)">
    <path d="M45 244l30-4 40 6 50-8 60 10 50 2 35 20 40 10 30 40 13 30v108h-348z" fill="#a21a10"/>
    <path d="M45 360h348v20h-348z" fill="#7c1209" opacity=".7"/>
    <path d="M150 270h150v100h-150z" fill="#b32015" opacity=".6"/>
    <path d="M100 250v208M192 250v208M282 262v196" stroke="#4a1a10" stroke-width="3"/>
    <path d="M84 250h22c8 60 28 130 30 175c-8 15-20 28-30 33c-15-10-25-40-26-75c2-50 4-90 4-133z" fill="#ece6e4"/>
    <g stroke="#c22a2f" stroke-width="5"><path d="M88 320l22 120M98 300l28 130M82 360l16 90"/></g>
    <path d="M84 250h22l6 50l-26 12z" fill="#2b356f"/>
    <path d="M185 255h14c12 50 24 110 26 160c-8 25-18 38-28 43c-14-12-24-40-28-70c4-45 10-90 16-133z" fill="#1e8a4c"/>
    <path d="M200 320l6 30-12 20" stroke="#cfe8d8" stroke-width="3" fill="none"/>
    <path d="M275 262h14c10 30 18 60 22 95h-48c2-35 6-65 12-95z" fill="#2b49b5"/>
    <path d="M263 357h48c3 30 2 60-4 80c-6 12-14 18-22 21c-14-8-26-25-30-45c2-20 5-40 8-56z" fill="#e9c531"/>
  </g>
</svg>
<!-- thumb 4 (active) -->
<div class="abs" style="left:666px;top:479px;width:182px;height:104.500px;border:3.200px solid #d96a2c"></div>
<div class="th" style="left:670.700px;width:172.500px;top:483.700px;height:94.800px"></div>
<div class="abs" style="left:0;top:0;width:1363px;height:616px;transform-origin:0 0;transform:translate(616.190px,444.350px) scale(.33240,.32470);pointer-events:none" class="mini">

<div class="t" style="left:192.20px;top:162.44px;line-height:26.3px;font-size:26.3px;font-weight:bold;color:#0d0d0d;letter-spacing:0.190px;">Комунікація</div>
<svg width="700" height="420" viewBox="0 0 700 420">
  <path d="M188.400 195.300c40-1.400 90 .6 150-.6s110-.8 170-.2 110-1.200 148.500-.4" fill="none" stroke="#e9853f" stroke-width="3" stroke-linecap="round"/>
  <path d="M200 196.300c60-.6 120 .4 200-.2s160-.6 250-.8" fill="none" stroke="#f0b184" stroke-width="1" stroke-linecap="round"/>
</svg>
<div class="t" style="left:192.70px;top:213.63px;line-height:9.3px;font-size:9.3px;color:#111;letter-spacing:0.250px;word-spacing:2.287px;-webkit-text-stroke:0.22px currentColor;">Комунікація в дипломатичних переговорах — це не лише</div>
<div class="t" style="left:192.70px;top:224.63px;line-height:9.3px;font-size:9.3px;color:#111;letter-spacing:0.285px;-webkit-text-stroke:0.22px currentColor;">обмін словами, а й складна система:</div>
<div class="t" style="left:192.70px;top:240.53px;line-height:9.3px;font-size:9.3px;color:#111;letter-spacing:0.262px;-webkit-text-stroke:0.22px currentColor;"><b>Вербальна:</b> виступи, заяви, пропозиції.</div>
<div class="t" style="left:192.70px;top:257.43px;line-height:9.3px;font-size:9.3px;color:#111;letter-spacing:0.250px;word-spacing:1.809px;-webkit-text-stroke:0.22px currentColor;"><b>Невербальна</b>: мова тіла, жести, інтонація, навіть порядок</div>
<div class="t" style="left:192.70px;top:268.03px;line-height:9.3px;font-size:9.3px;color:#111;letter-spacing:0.369px;-webkit-text-stroke:0.22px currentColor;">сидіння чи кольори прапорів мають значення.</div>
<div class="t" style="left:192.70px;top:284.53px;line-height:9.3px;font-size:9.3px;color:#111;letter-spacing:0.250px;word-spacing:10.921px;-webkit-text-stroke:0.22px currentColor;"><b>Пряма і непряма:</b> особисті зустрічі, листування,</div>
<div class="t" style="left:192.70px;top:295.53px;line-height:9.3px;font-size:9.3px;color:#111;letter-spacing:0.433px;-webkit-text-stroke:0.22px currentColor;">використання посередників.</div>
<div class="t" style="left:192.70px;top:311.93px;line-height:9.3px;font-size:9.3px;color:#111;letter-spacing:0.250px;word-spacing:5.838px;-webkit-text-stroke:0.22px currentColor;"><b>Формальна і неформальна</b>: переговори за столом і</div>
<div class="t" style="left:192.70px;top:322.93px;line-height:9.3px;font-size:9.3px;color:#111;letter-spacing:0.089px;-webkit-text-stroke:0.22px currentColor;">«дипломатія в кулуарах».</div>
<div class="t" style="left:192.70px;top:339.03px;line-height:9.3px;font-size:9.3px;font-style:italic;color:#111;letter-spacing:0.250px;word-spacing:2.446px;-webkit-text-stroke:0.22px currentColor;">Успішна комунікація потребує взаємної поваги, уважного</div>
<div class="t" style="left:192.70px;top:349.83px;line-height:9.3px;font-size:9.3px;font-style:italic;color:#111;letter-spacing:0.250px;word-spacing:0.979px;-webkit-text-stroke:0.22px currentColor;">слухання, стратегічного мислення та вміння читати між</div>
<div class="t" style="left:192.70px;top:360.43px;line-height:9.3px;font-size:9.3px;font-style:italic;color:#111;letter-spacing:0.250px;word-spacing:1.334px;-webkit-text-stroke:0.22px currentColor;">рядками. Усі ці елементи допомагають сторони не лише</div>
<div class="t" style="left:192.70px;top:371.33px;line-height:9.3px;font-size:9.3px;font-style:italic;color:#111;letter-spacing:0.250px;word-spacing:2.113px;-webkit-text-stroke:0.22px currentColor;">зрозуміти позиції одне одного, а й побудувати довіру —</div>
<div class="t" style="left:192.70px;top:382.73px;line-height:9.3px;font-size:9.3px;font-style:italic;color:#111;letter-spacing:0.296px;-webkit-text-stroke:0.22px currentColor;">критично важливий елемент дипломатії.</div>
<!-- slide photo -->
<svg style="left:490.2px;top:211.700px;filter:blur(.45px)" width="167.200" height="168.100" viewBox="0 0 542 545" preserveAspectRatio="none">
  <defs>
    <linearGradient id="gb" x1="0" y1="0" x2="1" y2="1"><stop offset="0" stop-color="#2a2fb0"/><stop offset=".5" stop-color="#3c44c8"/><stop offset="1" stop-color="#2e33a8"/></linearGradient>
    <linearGradient id="gy" x1="0" y1="0" x2="1" y2="1"><stop offset="0" stop-color="#e6e13c"/><stop offset=".5" stop-color="#f2ee55"/><stop offset="1" stop-color="#e3d935"/></linearGradient>
    <linearGradient id="gg" x1="0" y1="0" x2="1" y2="1"><stop offset="0" stop-color="#157a5c"/><stop offset=".5" stop-color="#1f8f6b"/><stop offset="1" stop-color="#0f6a50"/></linearGradient>
    <linearGradient id="gp" x1="0" y1="0" x2="1" y2="0"><stop offset="0" stop-color="#b8b0a0"/><stop offset=".5" stop-color="#efe9dc"/><stop offset="1" stop-color="#a89f8c"/></linearGradient>
  </defs>
  <rect width="542" height="545" fill="#0b0509"/>
  <rect x="190" y="395" width="190" height="150" fill="#2a2118"/>
  <rect x="225" y="440" width="120" height="105" fill="#3a2e20" opacity=".7"/>
  <rect x="100" y="0" width="22" height="545" fill="url(#gp)"/>
  <rect x="467" y="12" width="22" height="533" fill="url(#gp)"/>
  <ellipse cx="478" cy="12" rx="12" ry="9" fill="#b9ae8a"/>
  <rect x="447" y="30" width="20" height="24" fill="#8d8d8d"/>
  <path d="M490 100c20 10 38 24 52 40v105c-18-22-34-36-52-44z" fill="#128a63"/>
  <path d="M122 27c70 20 150 55 230 95s140 90 190 130v130c-60-40-130-80-200-100s-130-40-190-60z" fill="url(#gb)"/>
  <path d="M177 217c60 10 130 35 200 70s120 65 165 95v90c-60-20-140-30-220-45s-150-20-195-45c20-50 40-110 50-165z" fill="url(#gy)"/>
  <path d="M0 37c30 25 60 45 100 40s75-10 100 25c15 30 0 70-20 110c-15 40 10 70-15 105c-20 30-30 60-50 75s-60 5-115 -4z" fill="url(#gg)"/>
  <path d="M50 75c40 30 110 10 140 50c-40-20-100 0-140-50z" fill="#2aa37c" opacity=".5"/>
  <path d="M120 230c30 20 50 60 40 110c-10-40-30-70-40-110z" fill="#0a5540" opacity=".6"/>
  <path d="M2 140l8 30 8-25 8 32 8-30 8 28 8-26 8 20M4 190c20 10 30 12 40 0M0 275l8 10" fill="none" stroke="#e9f3ee" stroke-width="4" stroke-linecap="round"/>
</svg>

</div>
<!-- thumb 5 -->
<div class="th" style="left:866.700px;width:172.500px;top:483.700px;height:94.800px"></div>
<div class="t" style="left:897.40px;top:486.70px;line-height:7.8px;font-size:7.800px;font-weight:bold;color:#161616;letter-spacing:-0.430px;">Досягнення</div>
<div class="t" style="left:890.40px;top:495.40px;line-height:7.8px;font-size:7.800px;font-weight:bold;color:#161616;letter-spacing:-0.448px;">домовленостей</div>
<div class="abs tiny" style="left:870.200px;top:506px;width:86px;height:66px;font-size:2.750px;line-height:3.300px;color:#555"><b>Досягнення домовленостей у дипломатичних переговорах</b> — це кінцева мета, до якої прагнуть сторони у дипломатичній взаємодії. Домовленості – результат переговорного процесу, компромісів, обміну позиціями та поступками, в процесі якого сторони намагаються досягти взаємовигідного рішення.<br><br><b>Основні етапи, форми та результати:</b><br>1. <b>Офіційна</b> підготовка: аналіз інтересів сторін, розробка позицій, визначення цілей і меж компромісу — тим самим готується стратегія переговорів.<br>2. <b>Встановлення контакту та комунікація</b>: налагодження зв'язку, обмін позиціями, знайомство з точками зору та інтересами сторін.<br>3. <b>Переговорний процес</b>: обговорення питань, пропозицій, аргументів, пошук компромісу і пошук варіантів, які влаштують усі сторони.<br>4. <b>Формулювання домовленостей</b>: погодження тексту документа, угоди, меморандуму тощо. Після чого відбувається підписання документа і подальше виконання.<br>5. <b>Тлумачення положень</b>: письмова угода, усні домовленості. Юридичний статус і механізми реалізації.</div>
<svg style="left:856px;top:470px;filter:blur(.4px)" width="200" height="146" viewBox="0 0 844 616">
  <defs><clipPath id="c5"><rect x="45" y="58" width="728" height="400" rx="13"/></clipPath>
  <linearGradient id="ph5" x1="0" y1="0" x2="0" y2="1"><stop offset="0" stop-color="#6a5a52"/><stop offset=".45" stop-color="#3a302d"/><stop offset="1" stop-color="#55463f"/></linearGradient></defs>
  <g clip-path="url(#c5)">
    <path d="M470 58h303v400h-280l-20-30 12-40-18-30 10-40-14-30 22-30-24-40 30-20-26-40 36-20-20-40 28-20z" fill="url(#ph5)"/>
    <rect x="520" y="58" width="45" height="170" fill="#c9c7c2"/><rect x="660" y="58" width="40" height="60" fill="#d8d5cf"/>
    <rect x="565" y="58" width="208" height="30" fill="#6a4a40"/>
    <path d="M470 58h50v60l-30 20-22-10 8-30z" fill="#d9d7d2"/>
    <!-- standing men -->
    <path d="M470 95c10-20 30-20 36 0l14 40v100h-56z" fill="#1b1a1c"/><ellipse cx="486" cy="88" rx="14" ry="15" fill="#b99a8a"/><rect x="466" y="70" width="40" height="9" rx="3" fill="#1a1a1a"/>
    <path d="M570 140c10-18 40-18 52 0l10 90h-72z" fill="#2a2523"/><ellipse cx="596" cy="122" rx="15" ry="16" fill="#c2a595"/><rect x="576" y="100" width="40" height="10" rx="3" fill="#191919"/>
    <path d="M640 130c10-15 40-15 56 0l12 100h-78z" fill="#5a4a3c"/><ellipse cx="668" cy="110" rx="15" ry="16" fill="#c4a697"/><rect x="648" y="88" width="40" height="10" rx="3" fill="#2a2622"/>
    <path d="M720 160c8-10 30-10 40 0l13 80h-60z" fill="#3a342f"/><ellipse cx="740" cy="148" rx="12" ry="13" fill="#b99a8a"/>
    <!-- seated men -->
    <path d="M440 262c10-30 90-35 112 0l10 80-20 40h-95l-12-50z" fill="#7a726c"/><ellipse cx="492" cy="222" rx="20" ry="22" fill="#d2b8aa"/>
    <path d="M455 370h95l-6 88h-70z" fill="#3a3330"/>
    <path d="M556 250c14-28 84-28 100 0l18 100-30 30h-80l-16-50z" fill="#1f1d20"/><ellipse cx="604" cy="214" rx="19" ry="21" fill="#d8bfb2"/>
    <path d="M585 330l60-5 30 20-6 95h-30l-4-70-18 72h-30z" fill="#4a5a6e"/>
    <path d="M676 250c12-24 76-24 92 0l5 90v40h-90l-12-60z" fill="#57524c"/><ellipse cx="722" cy="214" rx="18" ry="20" fill="#c9ad9e"/><rect x="700" y="186" width="46" height="11" rx="4" fill="#3a342f"/>
    <path d="M690 345h83v80h-70z" fill="#4c4842"/>
    <path d="M430 440h343v18h-343z" fill="#5c4238"/>
  </g>
</svg>
<!-- thumb 6 -->
<div class="th" style="left:1063px;width:80px;top:483.700px;height:94.800px"></div>
<svg style="left:1040px;top:470px" width="100" height="146" viewBox="0 0 422 616">
  <rect x="140" y="100" width="14" height="12" fill="#5a7a9a"/><rect x="140" y="118" width="14" height="12" fill="#3a8a4a"/>
  <rect x="160" y="104" width="110" height="3" fill="#7a8a9a"/><rect x="160" y="122" width="115" height="3" fill="#7a8a9a"/>
  <path d="M137 180c10-20 40-28 70-22l30-10 50-8 50-15v70l-30 10-20 20-40 8-30 10-30-8-30-20z" fill="#f3b6bd"/>
  <path d="M205 138l60-8 40-10 32-5v45l-40 12-30-4-30 6-25-10z" fill="#a83a50"/>
  <path d="M270 175l30 5 20 12-30 4z" fill="#3a8a4a"/><path d="M200 225l12 0 8 14-12 0z" fill="#3a8a4a"/>
  <path d="M160 175l30 20 40 0 20 20M190 165l10 40M240 175l-6 40" stroke="#d98a98" stroke-width="2" fill="none"/>
  <rect x="275" y="208" width="12" height="10" fill="#3a2a2a"/><rect x="275" y="222" width="12" height="10" fill="#8a4a5a"/><rect x="292" y="210" width="34" height="3" fill="#888"/><rect x="292" y="224" width="34" height="3" fill="#888"/>
  <rect x="137" y="268" width="190" height="157" fill="#f6c98a"/>
  <path d="M300 268h27v30z" fill="#a8d8ee"/>
  <path d="M137 380l30-20 20 10 10 30 20 25h-80z" fill="#bfe2f2"/>
  <path d="M140 372l30-8 25 22 15 40" stroke="#3a9ad0" stroke-width="7" fill="none"/>
  <path d="M105 392c15-10 30-8 40 0" stroke="#3a9ad0" stroke-width="6" fill="none"/>
  <path d="M165 375l25-20 30-25 30-5 40 0 37-8" stroke="#e0542a" stroke-width="9" fill="none"/>
  <path d="M150 318h70" stroke="#8a5a2a" stroke-width="2"/>
  <g fill="#6a4a2a"><rect x="160" y="278" width="40" height="4"/><rect x="168" y="294" width="40" height="4"/><rect x="275" y="396" width="40" height="4"/><rect x="285" y="410" width="36" height="4"/><rect x="215" y="360" width="25" height="3"/><rect x="220" y="404" width="14" height="3"/></g>
  <ellipse cx="298" cy="296" rx="12" ry="7" fill="none" stroke="#5a8a4a" stroke-width="2"/>
</svg>
<!-- cover overflow of thumb6 beyond stage -->
<div class="abs" style="left:1118px;top:470px;width:30px;height:146px;background:#f5f5f5"></div>
<!-- numbers -->
<div class="t" style="left:86.30px;top:584.35px;line-height:14.0px;font-size:14px;color:#cfcfcf;">1</div>
<div class="t" style="left:282.30px;top:584.35px;line-height:14.0px;font-size:14px;color:#cfcfcf;">2</div>
<div class="t" style="left:478.30px;top:584.35px;line-height:14.0px;font-size:14px;color:#cfcfcf;">3</div>
<div class="t" style="left:673.80px;top:584.35px;line-height:14.0px;font-size:14px;color:#d96a2c;">4</div>
<div class="t" style="left:870.30px;top:584.35px;line-height:14.0px;font-size:14px;color:#cfcfcf;">5</div>
<div class="t" style="left:1066.30px;top:584.35px;line-height:14.0px;font-size:14px;color:#cfcfcf;">6</div>
<!-- scrollbar -->
<div class="abs" style="left:72px;top:612px;width:505px;height:4px;background:#5a5a5a;border-radius:2px 2px 0 0"></div>
<!--/STAGE-->

<!-- ================= RIGHT PANEL ================= -->
<!--RIGHT-->
<!-- tiles -->
<div class="tile" style="left:1123.500px;top:148px;width:115px;height:85.500px;background:linear-gradient(135deg,#f4e9ec 0%,#f1eeee 45%,#e6eef2 100%)"></div>
<div class="tile" style="left:1243.500px;top:148px;width:115.500px;height:85.500px;background:linear-gradient(100deg,#e7e5f1 0%,#e4eaf2 50%,#e0f0f0 100%)"></div>
<div class="tile" style="left:1123.500px;top:238px;width:115px;height:85.500px;background:linear-gradient(135deg,#f5ece6 0%,#f1efec 50%,#eef1f0 100%)"></div>
<div class="tile" style="left:1243.500px;top:238px;width:115.500px;height:85.500px;background:linear-gradient(135deg,#f1eff0 0%,#f4ebeb 60%,#f3e9ea 100%)"></div>
<div class="tile" style="left:1243.500px;top:328px;width:115.500px;height:85.500px;background:linear-gradient(135deg,#e8edf3 0%,#eceff3 60%,#eef0f3 100%)"></div>
<div class="tile" style="left:1123.200px;top:454.300px;width:235.800px;height:130.500px;border-radius:7px;background:linear-gradient(120deg,#e6f1ec 0%,#eaf3f0 50%,#e9f2f3 100%)"></div>
<!-- video tile -->
<div class="abs" style="left:1123.500px;top:328px;width:115px;height:85.500px;border-radius:7px;background:#5b5fc7"></div>
<div class="abs" style="left:1126.300px;top:330.800px;width:109.400px;height:79.900px;border-radius:4.500px;background:#fff"></div>
<svg style="left:1127.300px;top:332.200px;filter:blur(.55px)" width="107.900" height="77.100" viewBox="0 0 600 429" preserveAspectRatio="none">
  <defs>
    <clipPath id="cv"><rect width="600" height="429" rx="14"/></clipPath>
    <linearGradient id="wall" x1="0" y1="0" x2="1" y2="0"><stop offset="0" stop-color="#c8b49e"/><stop offset=".25" stop-color="#ddd0c0"/><stop offset=".8" stop-color="#d6c6b2"/><stop offset="1" stop-color="#c9b79f"/></linearGradient>
    <radialGradient id="face" cx=".5" cy=".45" r=".6"><stop offset="0" stop-color="#d5a692"/><stop offset=".6" stop-color="#c4917e"/><stop offset="1" stop-color="#9c6f60"/></radialGradient>
  </defs>
  <g clip-path="url(#cv)">
    <rect width="600" height="429" fill="url(#wall)"/>
    <path d="M0 275c40-8 90-3 128 12v50h-128z" fill="#eadfce"/>
    <path d="M0 335h118l-10 94h-108z" fill="#c48a5e"/>
    <path d="M440 330h160v99h-160z" fill="#dccaa9"/>
    <path d="M78 429l50-117 80-36 12 153zM410 380l120 20 50 29h-170z" fill="#18171a"/>
    <path d="M188 395c60 20 200 20 260 0v34h-260z" fill="#5c5b60"/>
    <path d="M222 300c30 70 170 70 200 0v110c-60 18-140 18-200 0z" fill="#b5826f"/>
    <path d="M163 150c0-110 60-160 160-160s160 50 160 160v70c0 100-70 175-160 175s-160-75-160-175z" fill="url(#face)"/>
    <path d="M160 170c-12-120 30-190 163-190s178 70 163 190c-6-70-20-115-45-135c-70 8-170 8-236 0c-25 20-39 65-45 135z" fill="#2c201c"/>
    <path d="M196 104c25-12 58-12 84-3M366 101c26-9 60-9 88 3" stroke="#33231e" stroke-width="11" fill="none" stroke-linecap="round"/>
    <ellipse cx="258" cy="134" rx="25" ry="8.500" fill="#3b2721"/><ellipse cx="403" cy="134" rx="25" ry="8.500" fill="#3b2721"/>
    <ellipse cx="258" cy="150" rx="34" ry="9" fill="#a77a70" opacity=".55"/><ellipse cx="403" cy="150" rx="34" ry="9" fill="#a77a70" opacity=".55"/>
    <path d="M325 140c-6 30-26 62-26 80c14 12 50 12 66 0c0-18-16-50-22-80" fill="#c28c7a" opacity=".85"/>
    <path d="M300 226c14 8 50 8 64 0" stroke="#9a675a" stroke-width="7" fill="none" opacity=".7"/>
    <path d="M274 280c35-9 90-9 124 0c-30 14-94 14-124 0z" fill="#b55f5c"/>
    <path d="M180 200c5 70 35 140 85 180M466 200c-5 70-35 140-85 180" stroke="#9f7262" stroke-width="22" fill="none" opacity=".4"/>
    <path d="M250 330c40 30 110 30 150 0" stroke="#a87a6a" stroke-width="10" fill="none" opacity=".35"/>
  </g>
</svg>
<!-- avatars -->
<div class="av" style="left:1156.900px;top:166.900px;width:48px;height:48px;background:#fbd9d3;box-shadow:0 1px 3px rgba(0,0,0,.12)"></div>
<div class="t" style="left:1171.40px;top:182.69px;line-height:17.5px;font-size:17.500px;font-weight:bold;color:#6d2f2f;letter-spacing:0.516px;">ОІ</div>
<div class="av" style="left:1277px;top:256.900px;width:48px;height:48px;background:#fbe8c6;box-shadow:0 1px 3px rgba(0,0,0,.12)"></div>
<div class="t" style="left:1288.60px;top:272.69px;line-height:17.5px;font-size:17.500px;font-weight:bold;color:#8a6215;letter-spacing:1.272px;">АК</div>
<div class="av" style="left:1277px;top:346.900px;width:48px;height:48px;background:#fce5ca;box-shadow:0 1px 3px rgba(0,0,0,.12)"></div>
<div class="t" style="left:1286.30px;top:362.69px;line-height:17.5px;font-size:17.500px;font-weight:bold;color:#8a5a1e;letter-spacing:1.444px;">ЯМ</div>
<!-- photo avatar: door / poster -->
<svg style="left:1277px;top:166.900px;filter:blur(.5px)" width="48" height="48" viewBox="0 0 48 48">
  <defs><clipPath id="ca1"><circle cx="24" cy="24" r="24"/></clipPath></defs>
  <g clip-path="url(#ca1)">
    <rect width="48" height="48" fill="#6b3a22"/>
    <rect x="0" y="0" width="12" height="48" fill="#d8d2c6"/>
    <rect x="12" y="0" width="5" height="48" fill="#4a2616"/>
    <rect x="24" y="0" width="24" height="8" fill="#3a86c8"/>
    <rect x="27" y="8" width="16" height="24" fill="#e6e8ea"/>
    <rect x="29" y="11" width="12" height="3" fill="#b8c4d0"/><rect x="29" y="17" width="12" height="3" fill="#c8d0d8"/><rect x="29" y="23" width="12" height="3" fill="#b8c4d0"/>
    <rect x="44" y="6" width="4" height="30" fill="#7a4428"/>
    <ellipse cx="17" cy="28" rx="5" ry="5.500" fill="#b9897a"/>
    <path d="M13 25c1-4 7-5 9 0c-2-1-6-1-9 0z" fill="#2a1d1a"/>
    <path d="M6 48c0-9 4-14 11-14s10 3 13 8l2 6z" fill="#17161a"/>
  </g>
</svg>
<!-- photo avatar: woman in pink -->
<svg style="left:1156.900px;top:256.900px;filter:blur(.5px)" width="48" height="48" viewBox="0 0 48 48">
  <defs><clipPath id="ca2"><circle cx="24" cy="24" r="24"/></clipPath>
  <linearGradient id="bg2" x1="0" y1="0" x2="1" y2="0"><stop offset="0" stop-color="#6e7a80"/><stop offset=".3" stop-color="#9aa6a6"/><stop offset=".7" stop-color="#b4bcb6"/><stop offset="1" stop-color="#8e9a98"/></linearGradient></defs>
  <g clip-path="url(#ca2)">
    <rect width="48" height="48" fill="url(#bg2)"/>
    <rect x="10" y="0" width="5" height="30" fill="#7d6a55" opacity=".6"/>
    <path d="M17 12c0-8 4-11 8-11s8 3 8 11v12h-16z" fill="#3a2620"/>
    <ellipse cx="25" cy="13" rx="5.500" ry="7" fill="#e9c8b8"/>
    <rect x="22.500" y="19" width="5" height="6" fill="#e3bfae"/>
    <path d="M5 48c0-14 6-22 14-24l6 4 6-4c8 2 13 10 13 24z" fill="#e8388c"/>
    <path d="M21 26l4 3 4-3v22h-8z" fill="#16141a"/>
    <path d="M22 24l3 4 3-4 1 6-4 3-4-3z" fill="#f0ede9"/>
    <rect x="31" y="34" width="4" height="4" fill="#5a2a4a"/>
  </g>
</svg>
<!-- photo avatar: large -->
<svg style="left:1209px;top:487.800px;filter:blur(.5px)" width="64" height="64" viewBox="0 0 64 64">
  <defs><clipPath id="ca3"><circle cx="32" cy="32" r="32"/></clipPath></defs>
  <g clip-path="url(#ca3)">
    <rect width="64" height="64" fill="#e8edee"/>
    <rect x="0" y="0" width="64" height="12" fill="#d4dcde"/>
    <rect x="28" y="0" width="2" height="20" fill="#9aa4a8"/><rect x="0" y="10" width="64" height="1.500" fill="#b9c4c8"/>
    <rect x="48" y="14" width="16" height="13" fill="#e4512f"/>
    <rect x="40" y="16" width="8" height="10" fill="#f1c9b0"/>
    <rect x="0" y="28" width="22" height="3" fill="#c4ced2"/><rect x="4" y="18" width="10" height="8" fill="#f3f6f6"/>
    <path d="M0 34l22-6v20l-22 8z" fill="#f4f6f6"/>
    <path d="M44 30h20v16h-20z" fill="#f2f4f4"/>
    <path d="M0 56c10-6 22-8 34-8s22 0 30-2v18h-64z" fill="#d8b894"/>
    <path d="M25 20c0-6 3-9 7-9s7 3 7 9v14h-14z" fill="#3a2a26"/>
    <ellipse cx="32" cy="20" rx="4.200" ry="5.200" fill="#d9ab94"/>
    <path d="M19 48c0-12 4-19 9-20l4 3 4-3c5 1 9 8 9 20l-6 4h-14z" fill="#33363c"/>
    <path d="M29 28l3 3 3-3 1 14h-8z" fill="#6a4a40"/>
    <ellipse cx="34" cy="51" rx="5" ry="2.800" fill="#d9ab94"/>
  </g>
</svg>
<!-- mic badges -->
<div class="mic" style="left:1127px;top:206px"></div>
<div class="mic" style="left:1247px;top:206px"></div>
<div class="mic" style="left:1127px;top:296px"></div>
<div class="mic" style="left:1247px;top:296px"></div>
<div class="mic" style="left:1247px;top:386px"></div>
<div class="mic" style="left:1131px;top:553px"></div>
<svg width="1363" height="616" viewBox="0 0 1363 616">
  <g transform="translate(1141,218.3)"><g fill="none" stroke="#fff" stroke-width="1.100" stroke-linecap="round"><rect x="-2.100" y="-6.500" width="4.200" height="8" rx="2.100" fill="#fff" stroke="none"/><path d="M-4 0a4 4 0 0 0 8 0M0 4v2.400"/><path d="M-6 -6.800l11.600 12.600" stroke="#737373" stroke-width="2.600"/><path d="M-6 -6.800l11.600 12.600" stroke-width="1"/></g></g>
  <g transform="translate(1261,218.3)"><g fill="none" stroke="#fff" stroke-width="1.100" stroke-linecap="round"><rect x="-2.100" y="-6.500" width="4.200" height="8" rx="2.100" fill="#fff" stroke="none"/><path d="M-4 0a4 4 0 0 0 8 0M0 4v2.400"/><path d="M-6 -6.800l11.600 12.600" stroke="#737373" stroke-width="2.600"/><path d="M-6 -6.800l11.600 12.600" stroke-width="1"/></g></g>
  <g transform="translate(1141,308.3)"><g fill="none" stroke="#fff" stroke-width="1.100" stroke-linecap="round"><rect x="-2.100" y="-6.500" width="4.200" height="8" rx="2.100" fill="#fff" stroke="none"/><path d="M-4 0a4 4 0 0 0 8 0M0 4v2.400"/><path d="M-6 -6.800l11.600 12.600" stroke="#737373" stroke-width="2.600"/><path d="M-6 -6.800l11.600 12.600" stroke-width="1"/></g></g>
  <g transform="translate(1261,308.3)"><g fill="none" stroke="#fff" stroke-width="1.100" stroke-linecap="round"><rect x="-2.100" y="-6.500" width="4.200" height="8" rx="2.100" fill="#fff" stroke="none"/><path d="M-4 0a4 4 0 0 0 8 0M0 4v2.400"/><path d="M-6 -6.800l11.600 12.600" stroke="#737373" stroke-width="2.600"/><path d="M-6 -6.800l11.600 12.600" stroke-width="1"/></g></g>
  <g transform="translate(1261,398.3)"><g fill="none" stroke="#fff" stroke-width="1.100" stroke-linecap="round"><rect x="-2.100" y="-6.500" width="4.200" height="8" rx="2.100" fill="#fff" stroke="none"/><path d="M-4 0a4 4 0 0 0 8 0M0 4v2.400"/><path d="M-6 -6.800l11.600 12.600" stroke="#737373" stroke-width="2.600"/><path d="M-6 -6.800l11.600 12.600" stroke-width="1"/></g></g>
  <g transform="translate(1145,565.3)"><g fill="none" stroke="#fff" stroke-width="1.100" stroke-linecap="round"><rect x="-2.100" y="-6.500" width="4.200" height="8" rx="2.100" fill="#fff" stroke="none"/><path d="M-4 0a4 4 0 0 0 8 0M0 4v2.400"/><path d="M-6 -6.800l11.600 12.600" stroke="#737373" stroke-width="2.600"/><path d="M-6 -6.800l11.600 12.600" stroke-width="1"/></g></g>
  <!-- pager -->
  <path d="M1217.300 428.400l-5.800 5.500 5.800 5.500" fill="none" stroke="#c6c6c6" stroke-width="1.300" stroke-linecap="round" stroke-linejoin="round"/>
  <path d="M1264.500 428.400l5.800 5.500-5.800 5.500" fill="none" stroke="#5a5a5a" stroke-width="1.300" stroke-linecap="round" stroke-linejoin="round"/>
</svg>
<div class="t" style="left:1231.60px;top:426.60px;line-height:14.3px;font-size:14.300px;color:#242424;letter-spacing:-0.287px;">1/7</div>
<!--/RIGHT-->

</body>
</html>
